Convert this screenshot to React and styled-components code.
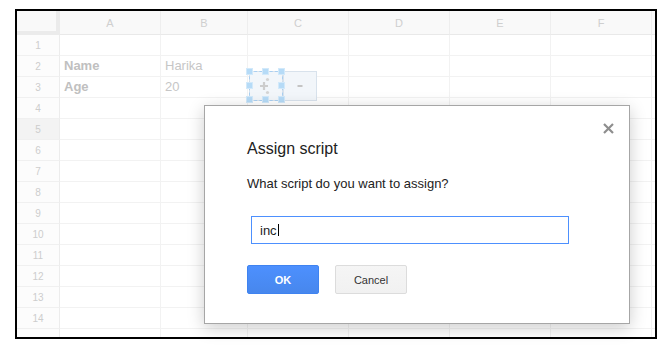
import React from 'react';
import styled, { createGlobalStyle } from 'styled-components';

const Global = createGlobalStyle`
  html, body { margin: 0; padding: 0; background: #fff; }
  body { font-family: "Liberation Sans", Arial, sans-serif; }
  * { box-sizing: border-box; }
`;

const Page = styled.div`
  position: relative;
  width: 672px;
  height: 349px;
  padding: 9px 0 0 15px;
  overflow: hidden;
`;

const Frame = styled.div`
  position: relative;
  width: 642px;
  height: 330px;
  border: 2px solid #000;
  overflow: hidden;
`;

const Sheet = styled.div`
  display: grid;
  grid-template-columns: 43px 101px 87px 101px 101px 101px 101px 20px;
  grid-template-rows: 24px repeat(15, 21px);
`;

const Corner = styled.div`
  background: #f9f9f9;
  border-right: 4px solid #ebebeb;
  border-bottom: 4px solid #ebebeb;
`;

const ColHeader = styled.div`
  display: flex;
  align-items: center;
  justify-content: center;
  background: #f9f9f9;
  border-right: 1px solid #eeeeee;
  border-bottom: 1px solid #e9e9e9;
  color: #cfcfcf;
  font-size: 11px;
`;

const RowHeader = styled.div`
  display: flex;
  align-items: center;
  justify-content: center;
  background: ${p => (p.$active ? '#f3f3f3' : '#fcfcfc')};
  border-right: 1px solid #ececec;
  border-bottom: 1px solid #f0f0f0;
  color: #cdcdcd;
  font-size: 10px;
`;

const Cell = styled.div`
  display: flex;
  align-items: flex-end;
  padding: 0 3px 2px 4px;
  border-right: 1px solid #f2f2f2;
  border-bottom: 1px solid #f2f2f2;
  font-size: 13px;
  line-height: 16px;
  font-weight: ${p => (p.$bold ? 700 : 400)};
  color: ${p => (p.$bold ? '#c0c0c0' : '#c6c6c6')};
  white-space: nowrap;
`;

const Drawing = styled.div`
  position: absolute;
  top: 60px;
  left: ${p => p.$left}px;
  width: 34px;
  height: 30px;
  display: flex;
  align-items: center;
  justify-content: center;
  background: #f2f6fa;
  border: 1px solid #d8e2ec;
`;

const Selection = styled.div`
  position: absolute;
  top: 60px;
  left: 232px;
  width: 34px;
  height: 30px;
  border: 1px dashed #a9cff1;
`;

const Handle = styled.span`
  position: absolute;
  width: 7px;
  height: 7px;
  background: #b6dbf7;
  border: 1px solid #d2e9fa;
  left: calc(${p => p.$x}% - 4px);
  top: calc(${p => p.$y}% - 4px);
`;

const Dialog = styled.div`
  position: absolute;
  left: 204px;
  top: 105px;
  width: 426px;
  padding: 33px 42px 29px;
  display: flex;
  flex-direction: column;
  align-items: flex-start;
  background: #fff;
  border: 1px solid #a6a6a6;
  box-shadow: 0 4px 16px rgba(0, 0, 0, 0.2);
`;

const Close = styled.button`
  position: absolute;
  top: 16px;
  right: 15px;
  width: 12px;
  height: 12px;
  padding: 0;
  border: 0;
  background: none;
  display: flex;
  align-items: center;
  justify-content: center;
`;

const Title = styled.div`
  font-size: 16px;
  line-height: 20px;
  color: #222;
`;

const Prompt = styled.div`
  margin-top: 17px;
  font-size: 13px;
  line-height: 16px;
  color: #222;
`;

const TextField = styled.div`
  margin: 24px 0 0 4px;
  width: 318px;
  height: 28px;
  padding: 0 8px;
  display: flex;
  align-items: center;
  border: 1px solid #4d90fe;
  font-size: 13px;
  color: #222;
`;

const Caret = styled.span`
  display: inline-block;
  width: 1px;
  height: 12px;
  margin-left: 1px;
  background: #000;
`;

const Buttons = styled.div`
  margin-top: 21px;
  display: flex;
  gap: 16px;
`;

const Button = styled.button`
  width: 72px;
  height: 29px;
  padding: 0;
  border-radius: 2px;
  font-family: "Liberation Sans", Arial, sans-serif;
  font-size: 11px;
  font-weight: ${p => (p.$primary ? 700 : 400)};
  color: ${p => (p.$primary ? '#fff' : '#333')};
  border: 1px solid ${p => (p.$primary ? '#3f83f0' : '#dcdcdc')};
  background: ${p =>
    p.$primary
      ? 'linear-gradient(#4d90fe, #4787ed)'
      : 'linear-gradient(#f5f5f5, #f1f1f1)'};
`;

const cols = ['A', 'B', 'C', 'D', 'E', 'F', ''];
const data = {
  2: ['Name', 'Harika'],
  3: ['Age', '20'],
};

export default function App() {
  const rows = Array.from({ length: 15 }, (_, i) => i + 1);
  return (
    <Page>
      <Global />
      <Frame>
        <Sheet>
          <Corner />
          {cols.map((c, i) => (
            <ColHeader key={i}>{c}</ColHeader>
          ))}
          {rows.map(r => (
            <React.Fragment key={r}>
              <RowHeader $active={r === 5}>{r < 15 ? r : ''}</RowHeader>
              {cols.map((c, i) => (
                <Cell key={i} $bold={i === 0}>
                  {data[r] && data[r][i]}
                </Cell>
              ))}
            </React.Fragment>
          ))}
        </Sheet>
        <Drawing $left={232}>
          <svg width="14" height="18" viewBox="0 0 14 18">
            <path d="M1 9h8M5 5v8" stroke="#cdcdcd" strokeWidth="2.2" />
            <circle cx="8.5" cy="2.5" r="1.6" fill="#d4d4d4" />
            <circle cx="8.5" cy="15.5" r="1.6" fill="#d4d4d4" />
          </svg>
        </Drawing>
        <Drawing $left={266}>
          <svg width="8" height="4" viewBox="0 0 8 4">
            <path d="M1.5 2h5" stroke="#c4c4c4" strokeWidth="2" />
          </svg>
        </Drawing>
        <Selection>
          {[
            [0, 0], [50, 0], [100, 0],
            [0, 50], [100, 50],
            [0, 100], [50, 100], [100, 100],
          ].map(([x, y]) => (
            <Handle key={`${x}-${y}`} $x={x} $y={y} />
          ))}
        </Selection>
      </Frame>
      <Dialog>
        <Close aria-label="Close">
          <svg width="11" height="11" viewBox="0 0 11 11">
            <path d="M1 1l9 9M10 1l-9 9" stroke="#8e8e8e" strokeWidth="2.2" />
          </svg>
        </Close>
        <Title>Assign script</Title>
        <Prompt>What script do you want to assign?</Prompt>
        <TextField>
          inc<Caret />
        </TextField>
        <Buttons>
          <Button $primary>OK</Button>
          <Button>Cancel</Button>
        </Buttons>
      </Dialog>
    </Page>
  );
}
